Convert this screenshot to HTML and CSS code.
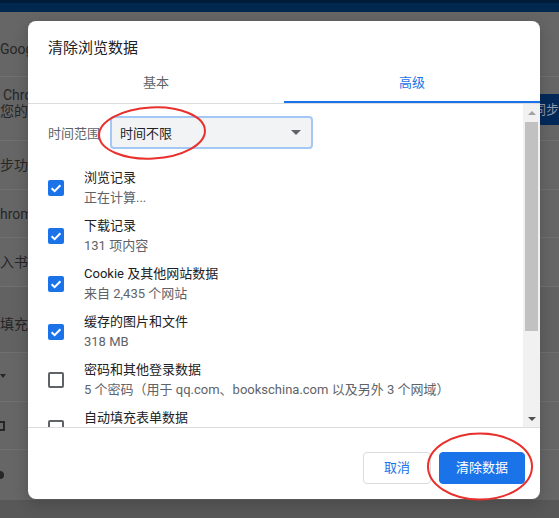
FILE: index.html
```html
<!DOCTYPE html>
<html lang="zh-CN">
<head>
<meta charset="utf-8">
<title>清除浏览数据</title>
<link rel="stylesheet" href="styles.css">
</head>
<body>
<div class="page">
  <div class="topbar"></div>
  <div class="row r1"><span class="frag">Google</span></div>
  <div class="row r2">
    <div class="frag two"><span class="indent">Chro</span><span>您的</span></div>
    <div class="syncbtn">启同步</div>
  </div>
  <div class="row r3"><span class="frag">步功</span></div>
  <div class="row r4"><span class="frag">hrome</span></div>
  <div class="row r5"><span class="frag">入书</span></div>
  <div class="row r6"><span class="frag">填充</span></div>
  <div class="row r7"><span class="icofrag tri"></span></div>
  <div class="row r8"><span class="icofrag box"></span></div>
  <div class="row r9"><span class="icofrag dot"></span></div>
  <div class="bottombar"></div>
</div>

<div class="dialog">
  <div class="dlg-title">清除浏览数据</div>
  <div class="tabs">
    <div class="tab">基本</div>
    <div class="tab active">高级</div>
  </div>
  <div class="sep"></div>
  <div class="body">
    <div class="content">
      <div class="range">
        <span class="range-label">时间范围</span>
        <div class="select"><span>时间不限</span><span class="caret"></span></div>
      </div>
      <div class="items">
        <div class="item">
          <span class="cb on"><svg viewBox="0 0 16 16" width="16" height="16"><path d="M3.6 8.2 L6.6 11.1 L12.4 5.2" fill="none" stroke="#fff" stroke-width="2"/></svg></span>
          <div class="txt"><div class="t1">浏览记录</div><div class="t2">正在计算...</div></div>
        </div>
        <div class="item">
          <span class="cb on"><svg viewBox="0 0 16 16" width="16" height="16"><path d="M3.6 8.2 L6.6 11.1 L12.4 5.2" fill="none" stroke="#fff" stroke-width="2"/></svg></span>
          <div class="txt"><div class="t1">下载记录</div><div class="t2">131 项内容</div></div>
        </div>
        <div class="item">
          <span class="cb on"><svg viewBox="0 0 16 16" width="16" height="16"><path d="M3.6 8.2 L6.6 11.1 L12.4 5.2" fill="none" stroke="#fff" stroke-width="2"/></svg></span>
          <div class="txt"><div class="t1">Cookie 及其他网站数据</div><div class="t2">来自 2,435 个网站</div></div>
        </div>
        <div class="item">
          <span class="cb on"><svg viewBox="0 0 16 16" width="16" height="16"><path d="M3.6 8.2 L6.6 11.1 L12.4 5.2" fill="none" stroke="#fff" stroke-width="2"/></svg></span>
          <div class="txt"><div class="t1">缓存的图片和文件</div><div class="t2">318 MB</div></div>
        </div>
        <div class="item">
          <span class="cb off"></span>
          <div class="txt"><div class="t1">密码和其他登录数据</div><div class="t2">5 个密码（用于 qq.com、bookschina.com 以及另外 3 个网域）</div></div>
        </div>
        <div class="item">
          <span class="cb off"></span>
          <div class="txt"><div class="t1">自动填充表单数据</div><div class="t2">&nbsp;</div></div>
        </div>
      </div>
    </div>
    <div class="scrollbar">
      <div class="arrow up"></div>
      <div class="thumb"></div>
      <div class="track-rest"></div>
      <div class="arrow down"></div>
    </div>
  </div>
  <div class="footer">
    <button class="btn cancel">取消</button>
    <button class="btn primary">清除数据</button>
  </div>
</div>

<svg class="marks" width="559" height="518" viewBox="0 0 559 518">
  <ellipse cx="152" cy="133" rx="53" ry="25.5" fill="none" stroke="#e8302c" stroke-width="2" transform="rotate(-3 152 133)"/>
  <ellipse cx="480" cy="466.5" rx="52" ry="33" fill="none" stroke="#e8302c" stroke-width="2"/>
</svg>
</body>
</html>
```

FILE: styles.css
```css
* { box-sizing: border-box; }

html, body {
  margin: 0;
  padding: 0;
}

body {
  width: 559px;
  height: 518px;
  overflow: hidden;
  position: relative;
  background: #666666;
  font-family: Roboto, "Noto Sans CJK SC", sans-serif;
  font-size: 13px;
}

/* dimmed page behind the dialog */
.page {
  display: flex;
  flex-direction: column;
  height: 518px;
  color: #262626;
}

.topbar {
  height: 12px;
  background: #01284f;
  border-top: 3px solid #001c38;
}

.row {
  display: flex;
  align-items: center;
  border-bottom: 1px solid #707070;
  flex: none;
}

.r1 { height: 65px; padding-top: 10px; }
.r2 { height: 64px; }
.r3 { height: 49px; }
.r4 { height: 48px; }
.r5 { height: 49px; }
.r6 { height: 66px; background: #626262; padding-top: 8px; }
.r7 { height: 49px; }
.r8 { height: 48px; }
.r9 { height: 50px; border-bottom: none; }

.bottombar {
  flex: 1;
  background: #585858;
}

.frag {
  font-size: 14px;
  line-height: 16px;
  white-space: nowrap;
}

.two {
  display: flex;
  flex-direction: column;
  margin-top: -12px;
}

.two .indent { padding-left: 3px; }

.syncbtn {
  margin-left: auto;
  width: 31px;
  height: 31px;
  background: #03295a;
  color: #8f9aa8;
  font-size: 13px;
  line-height: 31px;
  white-space: nowrap;
  overflow: hidden;
  direction: rtl;
  text-align: left;
  margin-top: 1px;
}

.icofrag { display: block; background: #262626; }
.icofrag.tri { width: 6px; height: 4px; margin-top: -2px; clip-path: polygon(0 0, 100% 0, 50% 100%); }
.icofrag.box { width: 5px; height: 10px; background: none; border: 2px solid #262626; border-left: none; }
.icofrag.dot { width: 4px; height: 8px; border-radius: 0 4px 4px 0; }

/* dialog */
.dialog {
  position: absolute;
  left: 28px;
  top: 21px;
  width: 512px;
  height: 478px;
  background: #ffffff;
  border-radius: 8px;
  overflow: hidden;
  display: flex;
  flex-direction: column;
  box-shadow: 0 4px 16px rgba(0, 0, 0, 0.2);
}

.dlg-title {
  height: 39px;
  padding: 17px 0 0 20px;
  font-size: 15px;
  line-height: 20px;
  color: #202124;
}

.tabs {
  display: flex;
  height: 43px;
}

.tab {
  flex: 1;
  text-align: center;
  padding-top: 13px;
  line-height: 20px;
  font-size: 13px;
  color: #5f6368;
  border-bottom: 2px solid transparent;
}

.tab.active {
  color: #1a73e8;
  border-bottom-color: #1a73e8;
}

.sep {
  height: 1px;
  background: #dadce0;
  flex: none;
}

.body {
  display: flex;
  height: 323px;
  flex: none;
}

.content {
  flex: 1;
  overflow: hidden;
  padding: 12px 0 0 20px;
}

.range {
  display: flex;
  align-items: center;
  height: 33px;
}

.range-label {
  color: #5f6368;
  width: 52px;
  margin-right: 10px;
  white-space: nowrap;
}

.select {
  width: 203px;
  height: 33px;
  background: #f1f3f4;
  border: 2px solid #a4c8f6;
  border-radius: 4px;
  display: flex;
  align-items: center;
  justify-content: space-between;
  padding: 0 10px 0 8px;
  color: #202124;
}

.caret {
  width: 0;
  height: 0;
  border-left: 5px solid transparent;
  border-right: 5px solid transparent;
  border-top: 5px solid #5f6368;
}

.items {
  margin-top: 15px;
}

.item {
  display: flex;
  align-items: center;
  height: 48px;
  padding: 4px 0;
}

.cb {
  width: 16px;
  height: 16px;
  border-radius: 2px;
  margin-right: 20px;
  flex: none;
  display: block;
}

.cb svg { display: block; }

.cb.on { background: #1a73e8; }

.cb.off { border: 2px solid #5f6368; }

.txt { line-height: 20px; white-space: nowrap; }

.t1 { color: #202124; }
.t2 { color: #5f6368; }

.scrollbar {
  width: 17px;
  flex: none;
  background: #f1f1f1;
  display: flex;
  flex-direction: column;
  align-items: center;
}

.arrow {
  width: 0;
  height: 0;
  border-left: 4px solid transparent;
  border-right: 4px solid transparent;
}

.arrow.up {
  border-bottom: 4px solid #a3a3a3;
  margin-top: 7px;
}

.thumb {
  margin-top: 7px;
  width: 13px;
  height: 209px;
  background: #c1c1c1;
}

.track-rest { flex: 1; }

.arrow.down {
  border-top: 4px solid #505050;
  margin-bottom: 6px;
}

.footer {
  border-top: 1px solid #dadce0;
  flex: 1;
  display: flex;
  justify-content: flex-end;
  align-items: flex-start;
  gap: 8px;
  padding: 24px 15px 0 0;
}

.btn {
  height: 32px;
  font-family: Roboto, "Noto Sans CJK SC", sans-serif;
  font-size: 13px;
  border-radius: 4px;
  cursor: pointer;
  line-height: 20px;
}

.btn.cancel {
  background: #ffffff;
  border: 1px solid #dadce0;
  color: #1a73e8;
  padding: 0 20px;
}

.btn.primary {
  background: #1a73e8;
  border: 1px solid #1a73e8;
  color: #ffffff;
  padding: 0 16px;
}

.marks {
  position: absolute;
  left: 0;
  top: 0;
  pointer-events: none;
}
```
